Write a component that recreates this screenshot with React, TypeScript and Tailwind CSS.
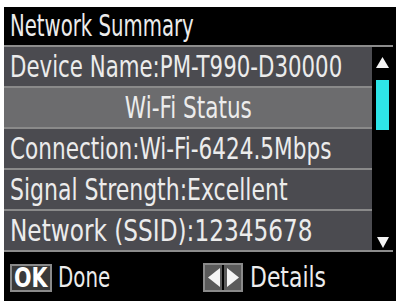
import React from 'react';

// each row carries its own squeeze so its width matches the LCD font
const ROWS = [
  { text: 'Device Name:PM-T990-D30000', header: false, squeeze: 'scale-x-[0.79]' },
  { text: 'Wi-Fi Status', header: true, squeeze: 'scale-x-[0.80]' },
  { text: 'Connection:Wi-Fi-6424.5Mbps', header: false, squeeze: 'scale-x-[0.80]' },
  { text: 'Signal Strength:Excellent', header: false, squeeze: 'scale-x-[0.815]' },
  { text: 'Network (SSID):12345678', header: false, squeeze: 'scale-x-[0.86]' },
];

const lcdFont = '[font-family:"DejaVu_Sans_Condensed","DejaVu_Sans",sans-serif]';

const Lcd: React.FC<{ children: React.ReactNode; center?: boolean; squeeze: string }> = ({ children, center, squeeze }) => (
  <span className={`inline-block whitespace-nowrap ${squeeze} ${center ? 'origin-center' : 'origin-left'}`}>
    {children}
  </span>
);

const Triangle: React.FC<{ dir: 'up' | 'down' | 'left' | 'right'; className?: string }> = ({ dir, className }) => {
  const points = {
    up: '6,0 12,11 0,11',
    down: '0,0 12,0 6,11',
    left: '11,0 11,12 0,6',
    right: '0,0 11,6 0,12',
  }[dir];
  const vb = dir === 'up' || dir === 'down' ? '0 0 12 11' : '0 0 11 12';
  return (
    <svg viewBox={vb} preserveAspectRatio="none" className={className}>
      <polygon points={points} fill="#f4f4f4" />
    </svg>
  );
};

export default function App() {
  return (
    <div className={`w-[401px] h-[301px] bg-white pl-[4px] pt-[7px] pr-[5px] ${lcdFont}`}>
      <div className="h-[294px] bg-black flex flex-col text-[#ececec] overflow-hidden">
        {/* Title */}
        <div className="h-[38px] pl-[6px] flex items-center text-[30px] leading-none">
          <Lcd squeeze="scale-x-[0.73]">Network Summary</Lcd>
        </div>

        {/* List + scrollbar */}
        <div className="border-t-2 border-b-2 border-[#8c8c8c] mr-[3px] flex">
          <div className="w-[368px] flex flex-col gap-[2px] bg-[#8a8a8a]">
            {ROWS.map((row) => (
              <div
                key={row.text}
                className={
                  row.header
                    ? 'h-[39px] bg-[#6c6c6e] flex items-center justify-center text-[30px] leading-none'
                    : 'h-[39px] bg-[#4b4b50] flex items-center pl-[6px] text-[30px] leading-none'
                }
              >
                <Lcd center={row.header} squeeze={row.squeeze}>
                  {row.text}
                </Lcd>
              </div>
            ))}
          </div>
          <div className="flex-1 flex flex-col items-center pt-[10px] pb-[2px]">
            <Triangle dir="up" className="w-[13px] h-[11px]" />
            <div className="w-[13px] h-[50px] bg-[#2ee5e8] mt-[12px]" />
            <div className="flex-1" />
            <Triangle dir="down" className="w-[12px] h-[11px]" />
          </div>
        </div>

        {/* Footer */}
        <div className="flex-1 flex items-center pl-[6px] pt-[2px] text-[29px] leading-none">
          <div className="w-[42px] h-[28px] border-2 border-[#8a8a8a] bg-[#3a3a3a] flex items-center justify-center font-bold text-[27px] text-white">
            <Lcd center squeeze="scale-x-[0.85]">
              OK
            </Lcd>
          </div>
          <div className="w-[151px] pl-[6px]">
            <Lcd squeeze="scale-x-[0.76]">Done</Lcd>
          </div>
          <div className="w-[40px] h-[29px] flex border-2 border-[#8a8a8a] bg-black">
            <div className="flex-1 bg-[#5a5a5a] flex items-center justify-center mr-[2px]">
              <Triangle dir="left" className="w-[12px] h-[19px]" />
            </div>
            <div className="flex-1 bg-[#5a5a5a] flex items-center justify-center">
              <Triangle dir="right" className="w-[12px] h-[19px]" />
            </div>
          </div>
          <div className="pl-[7px]">
            <Lcd squeeze="scale-x-[0.84]">Details</Lcd>
          </div>
        </div>
      </div>
    </div>
  );
}
